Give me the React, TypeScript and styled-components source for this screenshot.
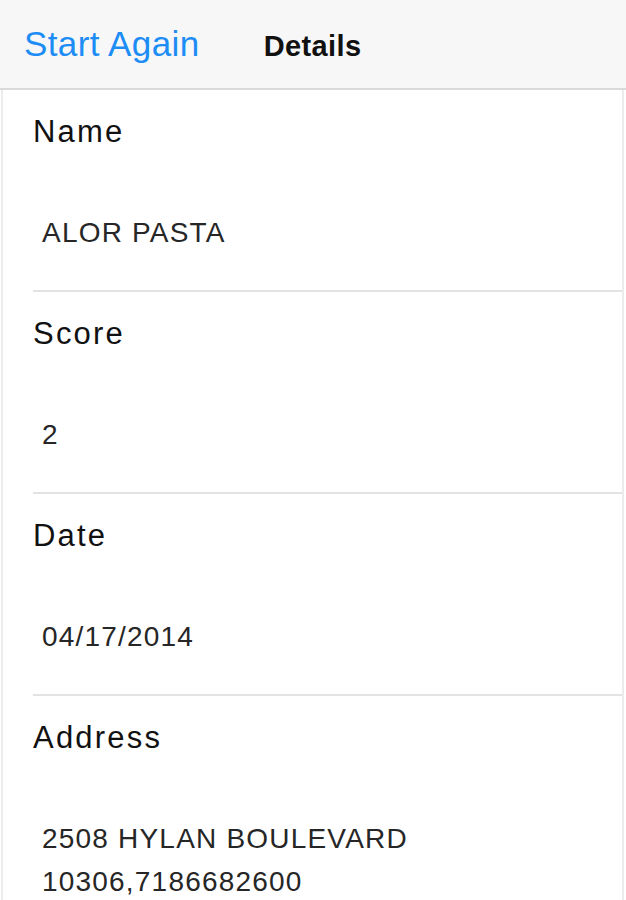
import React from 'react';
import styled, { createGlobalStyle } from 'styled-components';

// 화면에 보여줄 상세 항목
interface DetailItem {
    label: string;
    lines: string[];
}

const details: DetailItem[] = [
    { label: 'Name', lines: ['ALOR PASTA'] },
    { label: 'Score', lines: ['2'] },
    { label: 'Date', lines: ['04/17/2014'] },
    { label: 'Address', lines: ['2508 HYLAN BOULEVARD', '10306,7186682600'] },
];

const GlobalStyle = createGlobalStyle`
    html, body {
        margin: 0;
        padding: 0;
        background: #ffffff;
        font-family: "Liberation Sans", Arial, sans-serif;
        overflow: hidden;
    }
`;

export default function App() {
    return (
        <>
            <GlobalStyle />
            <Screen>
                <NavBar>
                    <BackButton>Start Again</BackButton>
                    <Title>Details</Title>
                </NavBar>

                <Content>
                    {details.map((item) => (
                        <Row key={item.label}>
                            <Label>{item.label}</Label>
                            <Value>
                                {item.lines.map((line) => (
                                    <div key={line}>{line}</div>
                                ))}
                            </Value>
                        </Row>
                    ))}
                </Content>
            </Screen>
        </>
    );
}

// ===== 스타일 =====

const Screen = styled.div`
    width: 626px;
    height: 900px;
    display: flex;
    flex-direction: column;
    overflow: hidden;
`;

const NavBar = styled.div`
    height: 90px;
    box-sizing: border-box;
    display: flex;
    align-items: baseline;
    gap: 64px;
    padding: 24px 0 0 24px;
    background: #f7f7f7;
    border-bottom: 2px solid #d9d9d9;
    flex-shrink: 0;
`;

const BackButton = styled.button`
    background: none;
    border: none;
    padding: 0;
    font-family: "Liberation Sans", Arial, sans-serif;
    font-size: 35px;
    line-height: 40px;
    letter-spacing: 0.4px;
    color: #1d8df5;
    cursor: pointer;
`;

const Title = styled.div`
    font-size: 29px;
    line-height: 40px;
    font-weight: 700;
    letter-spacing: 0.4px;
    color: #111111;
`;

const Content = styled.div`
    flex: 1;
    margin-left: 1px;
    margin-right: 2px;
    border-left: 2px solid #ececec;
    border-right: 2px solid #ececec;
    background: #ffffff;
`;

const Row = styled.div`
    margin-left: 30px;
    padding: 24px 0 36px;
    border-bottom: 2px solid #e3e3e3;
`;

const Label = styled.div`
    font-size: 31px;
    line-height: 36px;
    letter-spacing: 2.2px;
    color: #111111;
`;

const Value = styled.div`
    margin-top: 61px;
    padding-left: 9px;
    font-size: 28px;
    line-height: 43px;
    letter-spacing: 1.2px;
    color: #262626;
`;
